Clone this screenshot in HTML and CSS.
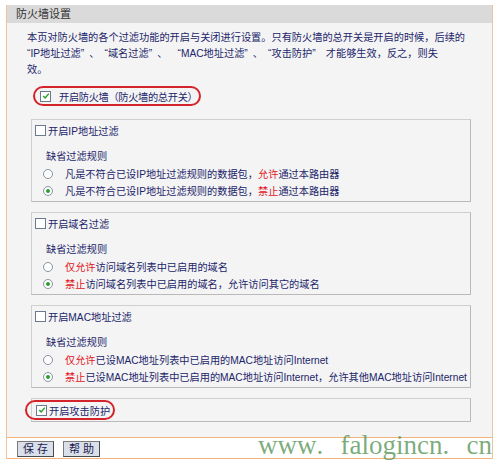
FILE: index.html
```html
<!DOCTYPE html>
<html lang="zh-CN">
<head>
  <meta charset="UTF-8">
  <title>防火墙设置</title>
  <link rel="stylesheet" href="styles.css">
</head>
<body>
  <div class="panel">
    <div class="panel-title">防火墙设置</div>
    <div class="panel-body">
      <p class="intro">本页对防火墙的各个过滤功能的开启与关闭进行设置。只有防火墙的总开关是开启的时候，后续的<br>“IP地址过滤”&ensp;、&ensp;“域名过滤”&ensp;、&ensp;&ensp;“MAC地址过滤”&ensp;、&ensp;“攻击防护”&ensp;&ensp;才能够生效，反之，则失<br>效。</p>

      <label class="oval oval-main"><span class="cb on"><svg viewBox="0 0 10 10" width="8" height="8"><path d="M1.5 5 L4 7.5 L8.5 2" fill="none" stroke="#2a9d2a" stroke-width="1.8"/></svg></span>开启防火墙（防火墙的总开关）</label>

      <div class="group">
        <div class="check-row"><span class="cb"></span>开启IP地址过滤</div>
        <div class="rule-title">缺省过滤规则</div>
        <div class="radio-row"><span class="rb"></span>凡是不符合已设IP地址过滤规则的数据包，<span class="hl">允许</span>通过本路由器</div>
        <div class="radio-row"><span class="rb on"></span>凡是不符合已设IP地址过滤规则的数据包，<span class="hl">禁止</span>通过本路由器</div>
      </div>

      <div class="group">
        <div class="check-row"><span class="cb"></span>开启域名过滤</div>
        <div class="rule-title">缺省过滤规则</div>
        <div class="radio-row"><span class="rb"></span><span class="hl">仅允许</span>访问域名列表中已启用的域名</div>
        <div class="radio-row"><span class="rb on"></span><span class="hl">禁止</span>访问域名列表中已启用的域名，允许访问其它的域名</div>
      </div>

      <div class="group">
        <div class="check-row"><span class="cb"></span>开启MAC地址过滤</div>
        <div class="rule-title">缺省过滤规则</div>
        <div class="radio-row"><span class="rb"></span><span class="hl">仅允许</span>已设MAC地址列表中已启用的MAC地址访问Internet</div>
        <div class="radio-row"><span class="rb on"></span><span class="hl">禁止</span>已设MAC地址列表中已启用的MAC地址访问Internet，允许其他MAC地址访问Internet</div>
      </div>

      <div class="group group-attack">
        <label class="oval oval-attack"><span class="cb on"><svg viewBox="0 0 10 10" width="8" height="8"><path d="M1.5 5 L4 7.5 L8.5 2" fill="none" stroke="#2a9d2a" stroke-width="1.8"/></svg></span>开启攻击防护</label>
      </div>
    </div>
    <div class="panel-foot">
      <button class="btn">保 存</button>
      <button class="btn">帮 助</button>
    </div>
  </div>
  <div class="watermark" lang="en">www<span class="dot">.</span>falogincn<span class="dot">.</span>cn</div>
</body>
</html>
```

FILE: styles.css
```css
body { margin: 0; background: #fff; font-family: "Liberation Sans", "Noto Sans CJK SC", sans-serif; font-size: 10.2px; color: #22246a; }
.panel { position: relative; margin: 5px 0 0 6px; width: 485px; border-left: 1px solid #f0c49a; border-right: 1px solid #f0c49a; }
.panel-title { height: 18px; line-height: 18px; padding-left: 9px; background: #dadada; color: #333; font-size: 11px; }
.panel-body { background: #f4f4f4; padding: 7px 21px 15px 24px; border-bottom: 1px solid #f2b47c; }
.intro { margin: 0 0 8px -4px; line-height: 16px; white-space: nowrap; }
.oval { display: flex; align-items: center; box-sizing: border-box; height: 20px; border: 2px solid #d4232b; border-radius: 10px; white-space: nowrap; }
.oval-main { width: max-content; margin-left: 2px; padding: 0 2px 0 5px; margin-bottom: 13px; letter-spacing: -0.3px; }
.oval-main .cb { margin-right: 8px; }
.oval-attack { width: 90px; margin-left: -7px; padding-left: 9px; }
.oval-attack .cb { margin-right: 2px; }
.cb { display: inline-flex; align-items: center; justify-content: center; box-sizing: border-box; width: 11px; height: 11px; border: 1px solid #6b7a8c; background: #fff; }
.group { padding: 2px 0 2px 0; margin-bottom: 10px; border: 1px solid #cfcfcf; border-right-color: #b9b9b9; border-bottom-color: #b9b9b9; }
.group-attack { padding: 1px 0; margin-bottom: 0; }
.check-row { display: flex; align-items: center; height: 16px; padding-left: 3px; }
.check-row .cb { margin-right: 2px; }
.rule-title { height: 16px; line-height: 16px; margin-top: 11px; padding-left: 14px; }
.radio-row { display: flex; align-items: center; height: 17px; padding-left: 11px; white-space: nowrap; }
.rb { box-sizing: border-box; width: 10px; height: 10px; margin-right: 12px; border: 1px solid #8794a4; border-radius: 50%; background: #fff; display: inline-flex; align-items: center; justify-content: center; }
.rb.on::after { content: ""; width: 4px; height: 4px; border-radius: 50%; background: #2aa02a; }
.hl { color: #e0141e; }
.panel-foot { display: flex; gap: 9px; height: 21px; padding: 3px 0 0 10px; box-sizing: border-box; border-bottom: 1px solid #f2b47c; background: #fff; }
.btn { height: 16px; padding: 0 5px; font-family: inherit; font-size: 11px; color: #1c1c50; background: #d9e0ea; border: 1px solid #4a4a4a; border-top-color: #7a7a7a; border-left-color: #7a7a7a; line-height: 14px; }
.watermark { position: absolute; left: 258px; top: 432px; font-family: "Liberation Serif", "Times New Roman", serif; font-size: 27px; line-height: 27px; color: rgba(80, 145, 80, 0.75); white-space: nowrap; }
.watermark .dot { display: inline-block; width: 24px; }
```
